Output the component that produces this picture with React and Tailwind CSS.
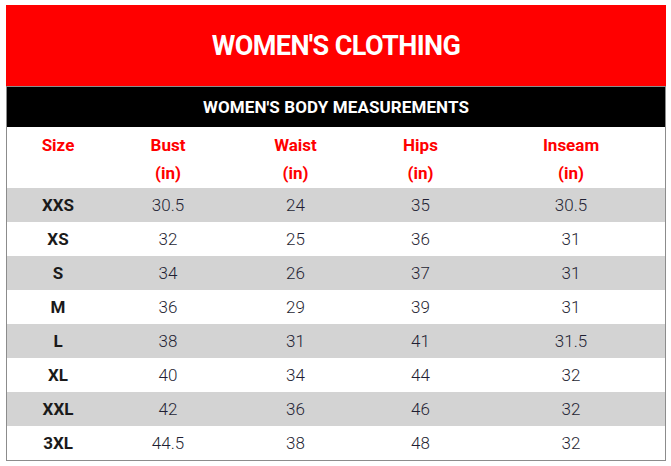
import React from "react";

const rows = [
  ["XXS", "30.5", "24", "35", "30.5"],
  ["XS", "32", "25", "36", "31"],
  ["S", "34", "26", "37", "31"],
  ["M", "36", "29", "39", "31"],
  ["L", "38", "31", "41", "31.5"],
  ["XL", "40", "34", "44", "32"],
  ["XXL", "42", "36", "46", "32"],
  ["3XL", "44.5", "38", "48", "32"],
];

const grid = "grid grid-cols-[102px_118px_137px_113px_188px]";

export default function App() {
  return (
    <div className="w-[671px] h-[466px] bg-white pt-[5px] pl-[6px]" style={{ fontFamily: "Roboto, 'Liberation Sans', sans-serif" }}>
      <div className="w-[660px]">
        <div className="h-[81px] bg-[#ff0000] flex items-center justify-center">
          <span className="text-white font-bold text-[27px] tracking-[-0.6px] pt-[2px]">WOMEN'S CLOTHING</span>
        </div>
        <div className="border border-[#8c8c8c]">
          <div className="h-[40px] bg-black flex items-center justify-center">
            <span className="text-white font-bold text-[17px] tracking-[0.1px] pt-[1px]">WOMEN'S BODY MEASUREMENTS</span>
          </div>
          <div className={`${grid} h-[61px] pt-[4px] text-[#ff0000] font-bold text-[17px] leading-[28px] text-center`}>
            <div>Size</div>
            <div>Bust<br />(in)</div>
            <div>Waist<br />(in)</div>
            <div>Hips<br />(in)</div>
            <div>Inseam<br />(in)</div>
          </div>
          {rows.map((r, i) => (
            <div key={r[0]} className={`${grid} h-[34px] items-center text-center text-[17px] pt-[2px] ${i % 2 === 0 ? "bg-[#d3d3d3]" : "bg-white"}`}>
              <div className="font-bold text-[#1a1a1a]">{r[0]}</div>
              {r.slice(1).map((v, j) => (
                <div key={j} className="font-light text-[#1f1f33]">{v}</div>
              ))}
            </div>
          ))}
        </div>
      </div>
    </div>
  );
}
